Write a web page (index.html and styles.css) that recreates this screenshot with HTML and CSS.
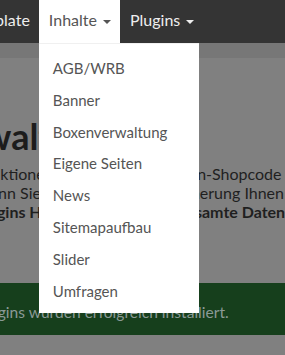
FILE: index.html
```html
<!DOCTYPE html>
<html lang="de">
<head>
    <meta charset="UTF-8">
    <meta name="viewport" content="width=device-width, initial-scale=1.0">
    <title>Pluginverwaltung</title>
    <link rel="stylesheet" href="styles.css">
</head>
<body>
    <nav class="navbar">
        <ul class="nav-list">
            <li class="nav-item"><a href="#">Template</a></li>
            <li class="nav-item active">
                <a href="#">Inhalte <span class="caret"></span></a>
                <ul class="dropdown">
                    <li><a href="#">AGB/WRB</a></li>
                    <li><a href="#">Banner</a></li>
                    <li><a href="#">Boxenverwaltung</a></li>
                    <li><a href="#">Eigene Seiten</a></li>
                    <li><a href="#">News</a></li>
                    <li><a href="#">Sitemapaufbau</a></li>
                    <li><a href="#">Slider</a></li>
                    <li><a href="#">Umfragen</a></li>
                </ul>
            </li>
            <li class="nav-item"><a href="#">Plugins <span class="caret"></span></a></li>
        </ul>
    </nav>

    <div class="subbar"></div>

    <div class="content">
        <h1 class="page-title">Pluginverwaltung</h1>
        <p class="page-text">
            Funktionen erweitern, ohne Kern-Shopcode zu ändern.<br>
            Wenn Sie keine echte Datensicherung Ihnen nicht<br>
            <strong>Plugins Haben Zugriff an die gesamte Datenbank</strong>
        </p>
        <div class="alert-success">Plugins wurden erfolgreich installiert.</div>
    </div>
</body>
</html>
```

FILE: styles.css
```css
body {
    margin: 0;
    padding: 0;
    font-family: Lato, 'Open Sans', sans-serif;
    background: #808080;
    overflow: hidden;
}

.navbar {
    position: relative;
    z-index: 10;
    height: 43px;
    background: #343434;
}

.nav-list {
    display: flex;
    list-style: none;
    margin: 0 0 0 -44px;
    padding: 0;
}

.nav-item {
    position: relative;
}

.nav-item > a {
    display: block;
    height: 43px;
    line-height: 40px;
    padding: 0 9px 0 10px;
    font-size: 16px;
    color: #eeeeee;
    text-decoration: none;
}

.nav-item.active > a {
    background: #ffffff;
    color: #555555;
}

.caret {
    display: inline-block;
    width: 0;
    height: 0;
    margin-left: 2px;
    vertical-align: middle;
    border-top: 4px solid;
    border-left: 4px solid transparent;
    border-right: 4px solid transparent;
}

.dropdown {
    position: absolute;
    top: 43px;
    left: 0;
    width: 160px;
    margin: 0;
    padding: 9px 0 6px;
    list-style: none;
    background: #ffffff;
    border-top: 1px solid #f0f0f0;
    box-sizing: border-box;
}

.dropdown a {
    display: block;
    padding: 5px 14px;
    line-height: 21.8px;
    font-size: 15px;
    color: #555555;
    text-decoration: none;
}

.subbar {
    height: 15px;
    background: #777777;
}

.page-title {
    margin: 58px 0 8px -168px;
    font-size: 36px;
    font-weight: 700;
    line-height: 40px;
    color: #1c1c1c;
    white-space: nowrap;
}

.page-text {
    margin: 0 0 0 -26px;
    font-size: 16px;
    line-height: 19px;
    color: #1f1f1f;
    white-space: nowrap;
}

.alert-success {
    margin-top: 62px;
    height: 49px;
    padding-top: 3px;
    line-height: 52px;
    margin-left: -24px;
    background: #163f1c;
    color: #8b9a96;
    font-size: 15.6px;
    white-space: nowrap;
}
```
